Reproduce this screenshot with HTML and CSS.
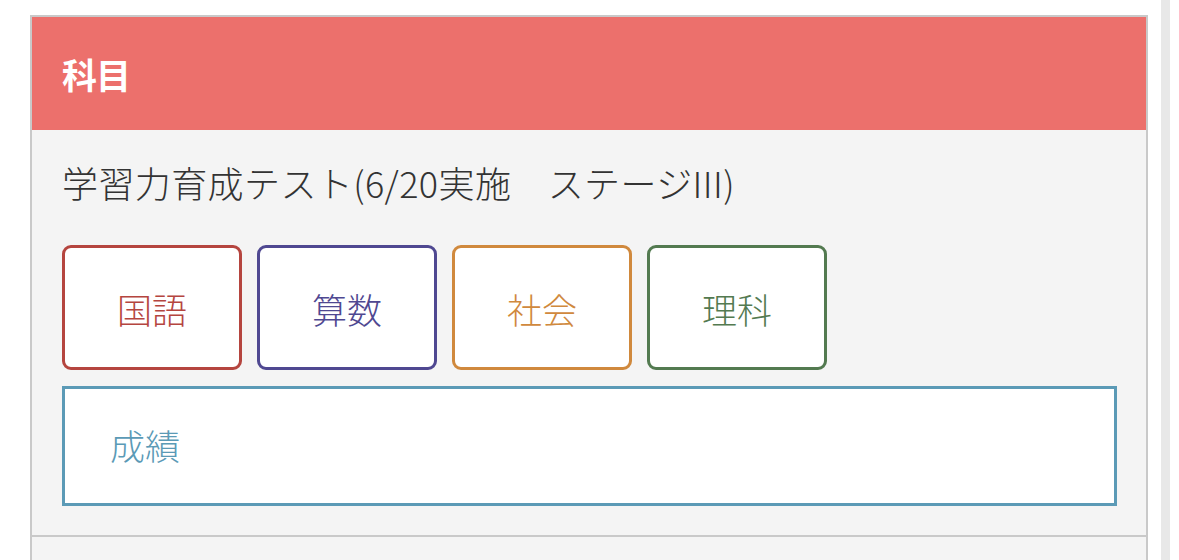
FILE: index.html
```html
<!DOCTYPE html>
<html lang="ja">
<head>
<meta charset="utf-8">
<link rel="stylesheet" href="styles.css">
</head>
<body>
<div class="page">
  <main class="main">
    <section class="card">
      <header class="card-head">科目</header>
      <div class="card-body">
        <p class="test-title">学習力育成テスト(6/20実施　ステージIII)</p>
        <div class="subjects">
          <a class="subj subj-jp">国語</a>
          <a class="subj subj-math">算数</a>
          <a class="subj subj-soc">社会</a>
          <a class="subj subj-sci">理科</a>
        </div>
        <a class="grades">成績</a>
      </div>
      <div class="card-next"></div>
    </section>
  </main>
  <div class="scroll-strip"></div>
</div>
</body>
</html>
```

FILE: styles.css
```css
html, body {
  margin: 0;
  padding: 0;
  background: #ffffff;
  height: 100%;
  overflow: hidden;
}
body {
  font-family: "Noto Sans CJK JP", "Noto Sans", sans-serif;
  color: #333333;
}
.page {
  display: flex;
  height: 560px;
}
.main {
  width: 1148px;
  padding: 15px 0 0 30px;
  box-sizing: border-box;
}
.card {
  border: 2px solid #c9c9c9;
  border-bottom: none;
  display: flex;
  flex-direction: column;
  height: 545px;
  box-sizing: border-box;
}
.card-head {
  height: 113px;
  background: #ec706c;
  color: #ffffff;
  font-size: 35px;
  font-weight: 700;
  display: flex;
  align-items: center;
  padding: 0 30px;
  letter-spacing: -1px;
}
.card-body {
  background: #f4f4f4;
  padding: 28px 29px 29px 30px;
  display: flex;
  flex-direction: column;
  border-bottom: 2px solid #c9c9c9;
}
.test-title {
  margin: 0;
  font-size: 36px;
  font-weight: 300;
  line-height: 48px;
  height: 48px;
  letter-spacing: 0.4px;
}
.subjects {
  display: flex;
  gap: 15px;
  margin-top: 39px;
}
.subj {
  width: 180px;
  height: 125px;
  box-sizing: border-box;
  border: 3px solid;
  border-radius: 9px;
  background: #ffffff;
  display: flex;
  align-items: center;
  justify-content: center;
  font-size: 35px;
  font-weight: 300;
  padding-top: 1px;
}
.subj-jp { border-color: #b5453f; color: #b5453f; }
.subj-math { border-color: #4f4891; color: #4f4891; }
.subj-soc { border-color: #d0893d; color: #d0893d; }
.subj-sci { border-color: #537a50; color: #537a50; }
.grades {
  margin-top: 16px;
  height: 120px;
  box-sizing: border-box;
  border: 3px solid #5b9ab6;
  background: #ffffff;
  color: #5b9ab6;
  font-size: 35px;
  font-weight: 300;
  display: flex;
  align-items: center;
  padding-left: 45px;
  padding-bottom: 4px;
}
.card-next {
  flex: 1;
  background: #f4f4f4;
}
.scroll-strip {
  width: 9px;
  margin-left: 13px;
  background: #e8e8e8;
  height: 100%;
}
```
